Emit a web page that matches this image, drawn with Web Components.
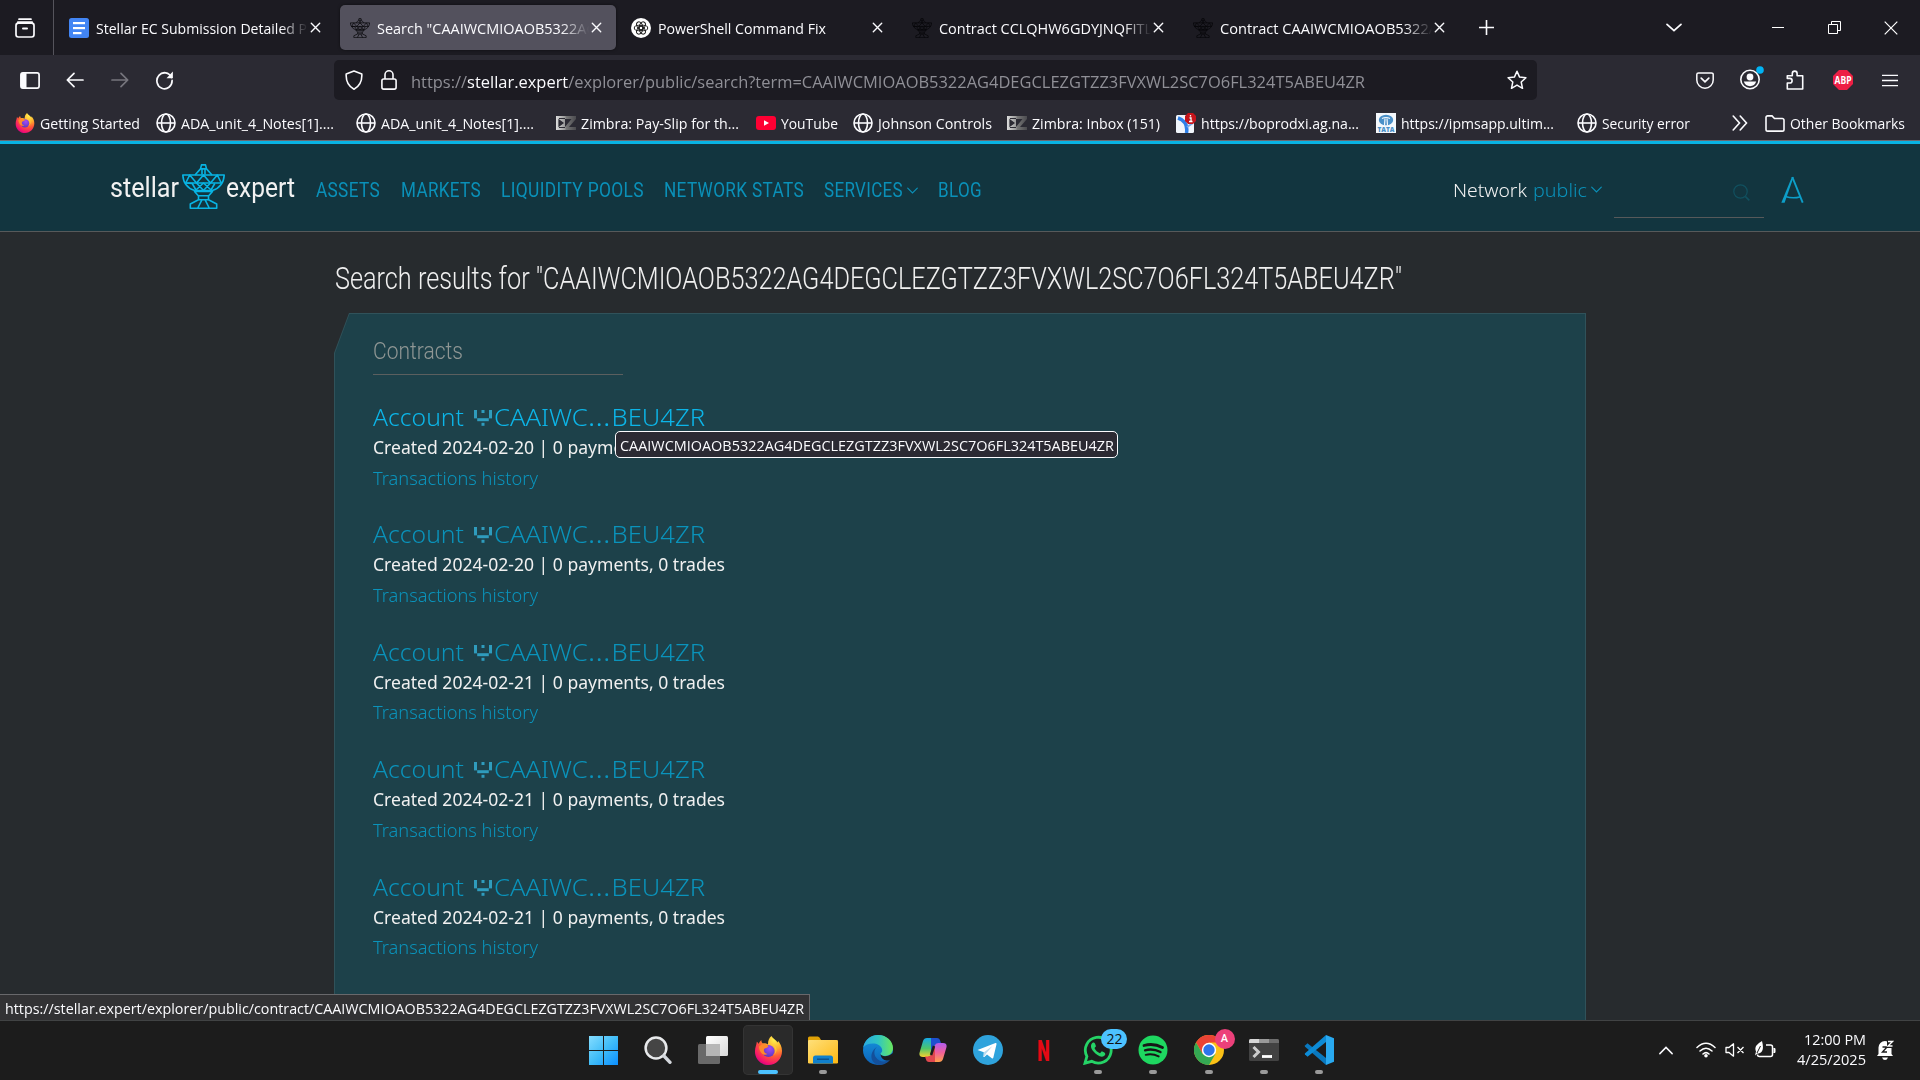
<!DOCTYPE html>
<html lang="en">
<head>
<meta charset="utf-8">
<title>Search - StellarExpert</title>
<style>
html,body{margin:0;height:100%;background:#272b2e;overflow:hidden}
body{font-family:"Open Sans","Noto Sans",sans-serif;color:#fbfbfe}
</style>
</head>
<body>
<desktop-screen></desktop-screen>
<script>
const ICONS = {
archive:['0 0 20 20','<g fill="none" stroke="#fbfbfe" stroke-width="1.7" stroke-linecap="round"><path d="M4 1.2h12M2.8 4.2h14.4"/><rect x="1" y="5.2" width="18" height="13.8" rx="2.4"/><path d="M8 10.4h4" stroke-width="2"/></g>'],
docs:['0 0 20 20','<rect width="20" height="20" rx="2.5" fill="#4285f4"/><g fill="#fff"><rect x="4" y="4" width="12" height="2.2"/><rect x="4" y="9" width="12" height="2.2"/><rect x="4" y="14" width="8.5" height="2.2"/></g>'],
x:['0 0 12 12','<path d="M1.4 1.4l9.2 9.2M10.6 1.4L1.4 10.6" stroke="#fbfbfe" stroke-width="1.5" stroke-linecap="round"/>'],
gpt:['0 0 20 20','<circle cx="10" cy="10" r="10" fill="#fff"/><g fill="none" stroke="#222" stroke-width="1"><ellipse cx="10" cy="7.6" rx="2.7" ry="4.3" transform="rotate(30 10 10)"/><ellipse cx="10" cy="7.6" rx="2.7" ry="4.3" transform="rotate(90 10 10)"/><ellipse cx="10" cy="7.6" rx="2.7" ry="4.3" transform="rotate(150 10 10)"/><ellipse cx="10" cy="7.6" rx="2.7" ry="4.3" transform="rotate(210 10 10)"/><ellipse cx="10" cy="7.6" rx="2.7" ry="4.3" transform="rotate(270 10 10)"/><ellipse cx="10" cy="7.6" rx="2.7" ry="4.3" transform="rotate(330 10 10)"/></g>'],
dish:['0 0 43 45','<g fill="none" stroke="currentColor" stroke-width="1.6" stroke-linejoin="round"><path d="M19.5.9h4l1 4h-6zM18.5 4.9L13 11M24.5 4.9L30 11M20 5.2v5.3M23 5.2v5.3"/><path d="M.8 11h41.4c-.4 8-5.2 13.5-12 15.5H12.800C6 24.500 1.200 19 .8 11zM3.600 19h35.800"/><path d="M3.700 19l4-8 6.800 8 7-8 7 8 6.800-8 4 8M3.700 19l6.500.5 3.800 6.500 7.500-7 7.500 7 3.800-6.500M14.500 19l7 7.500 7-7.500"/><path d="M12.500 27.500h18l-3.800 4.200H16.300zM16.500 31.700v4h10v-4M16.500 35.700L8.300 40v4.200h26.400V40l-8.200-4.300M20 35.700L15.800 44M23 35.700L27.200 44"/></g>'],
plus:['0 0 14 14','<path d="M7 0v14M0 7h14" stroke="#fbfbfe" stroke-width="1.5"/>'],
chev:['0 0 16 10','<path d="M1 1.500l7 7 7-7" fill="none" stroke="currentColor" stroke-width="1.700" stroke-linecap="round"/>'],
min:['0 0 12 12','<path d="M0 6.500h12" stroke="#fff" stroke-width="1"/>'],
restore:['0 0 13 13','<path d="M.5 3.500h9v9h-9zM3.500 3.500v-3h9v9h-3" fill="none" stroke="#fff"/>'],
wclose:['0 0 14 14','<path d="M.7.7l12.600 12.600M13.300.7L.7 13.300" stroke="#fff" stroke-width="1.200"/>'],
side:['0 0 20 16','<rect x=".9" y=".9" width="18.200" height="14.200" rx="2" fill="none" stroke="#fbfbfe" stroke-width="1.700"/><path d="M1 1h5.500v14H1z" fill="#fbfbfe"/>'],
back:['0 0 18 16','<path d="M17 8H1.500M8 1.300L1.300 8 8 14.700" fill="none" stroke="currentColor" stroke-width="1.700" stroke-linecap="round" stroke-linejoin="round"/>'],
reload:['0 0 20 20','<path d="M17.300 7.500A8 8 0 1 0 18 10.500" fill="none" stroke="#fbfbfe" stroke-width="1.800" stroke-linecap="round"/><path d="M18.800 1.500v6.700h-6.700z" fill="#fbfbfe"/>'],
shield:['0 0 18 20','<path d="M9 1l7.800 3c.4 6.500-1.800 12-7.800 15.200C3 16 .8 10.500 1.200 4z" fill="none" stroke="#fbfbfe" stroke-width="1.600" stroke-linejoin="round"/>'],
lock:['0 0 16 20','<rect x=".9" y="9" width="14.200" height="10.100" rx="1.800" fill="none" stroke="#fbfbfe" stroke-width="1.600"/><path d="M4 9V4.800a4 4 0 0 1 8 0V9" fill="none" stroke="#fbfbfe" stroke-width="1.600"/>'],
star:['0 0 20 20','<path d="M10 1.300l2.600 5.800 6.300.7-4.700 4.200 1.300 6.300-5.500-3.200-5.500 3.200 1.300-6.300L1.100 7.800l6.300-.7z" fill="none" stroke="#fbfbfe" stroke-width="1.500" stroke-linejoin="round"/>'],
pocket:['0 0 18 17','<path d="M2.500.9h13a1.700 1.700 0 0 1 1.700 1.700V8a8.200 8.200 0 0 1-16.400 0V2.600A1.700 1.700 0 0 1 2.500.9z" fill="none" stroke="#fbfbfe" stroke-width="1.500"/><path d="M5.200 6.200L9 9.800l3.800-3.600" fill="none" stroke="#fbfbfe" stroke-width="1.700" stroke-linecap="round"/>'],
account:['0 0 24 24','<circle cx="10" cy="13.500" r="9.200" fill="none" stroke="#fbfbfe" stroke-width="1.600"/><circle cx="10" cy="11" r="3.400" fill="#fbfbfe"/><path d="M3.800 15.600h12.400a6.500 6.500 0 0 1-12.400 0z" fill="#fbfbfe"/><circle cx="20" cy="4" r="3.800" fill="#00b3f4"/>'],
puzzle:['0 0 18 20','<path d="M1.300 19V13h2.500a2.300 2.300 0 0 0 0-4.600H1.300V5.800h5V3.500a2.400 2.400 0 0 1 4.800 0v2.300h5.600V19z" fill="none" stroke="#fbfbfe" stroke-width="1.600" stroke-linejoin="round"/>'],
abp:['0 0 20 20','<path d="M6 0h8l6 6v8l-6 6H6l-6-6V6z" fill="#ed1e45"/><text x="10" y="13.600" text-anchor="middle" font-family="Open Sans" font-weight="700" font-size="10" textLength="17" lengthAdjust="spacingAndGlyphs" fill="#fff">ABP</text>'],
menu:['0 0 16 14','<path d="M0 1.500h16M0 7h16M0 12.500h16" stroke="#fbfbfe" stroke-width="1.400"/>'],
globe:['0 0 20 20','<g fill="none" stroke="#fbfbfe" stroke-width="1.600"><circle cx="10" cy="10" r="9"/><ellipse cx="10" cy="10" rx="4.500" ry="9"/><path d="M1 10h18"/></g>'],
zimbra:['0 0 20 14','<defs><linearGradient id="z"><stop offset="0" stop-color="#ddd"/><stop offset=".45" stop-color="#999"/><stop offset=".5" stop-color="#777"/><stop offset="1" stop-color="#4b4b4f"/></linearGradient></defs><path d="M0 0h9v14H0zM9 0h11v3l-7 8h7v3H9v-3l6.500-8H9z" fill="url(#z)"/><path d="M3 2.500h6M3 11.500h6M3 4l4 3-4 3z" fill="#2b2a33" stroke="#2b2a33" stroke-width="1.200"/>'],
yt:['0 0 20 14','<rect width="20" height="14" rx="3" fill="#ff0033"/><path d="M8 4.200l5 2.800-5 2.800z" fill="#fff"/>'],
sicon:['0 0 20 20','<rect y="2" width="18" height="18" rx="1.500" fill="#f1f5fb"/><path d="M2 5c6 2 10 6 8.500 15" fill="none" stroke="#2f80e8" stroke-width="3.500"/><path d="M17 10l-6 4" stroke="#7aa9e8" stroke-width="2"/><path d="M12 0h5l3 3v5l-3 3h-5L9 8V3z" fill="#c5141b"/><path d="M14.500 2v1.500M13.500 5h1.500v3.500M13 8.500h3.500" stroke="#fff" stroke-width="1.300"/>'],
tata:['0 0 20 20','<rect width="20" height="20" fill="#f4f8fc"/><ellipse cx="10" cy="7" rx="7.200" ry="5.200" fill="#4a90c8"/><path d="M6 5.500q4-2 8 0M9 5.500l-.5 7M11 5.500l.5 7" stroke="#f4f8fc" stroke-width="1.200" fill="none"/><text x="10" y="18.800" text-anchor="middle" font-family="Open Sans" font-weight="800" font-size="6.200" textLength="17" lengthAdjust="spacingAndGlyphs" fill="#4a90c8">TATA</text>'],
more:['0 0 16 16','<path d="M1.200 1l6.300 7-6.300 7M8.200 1l6.300 7-6.300 7" fill="none" stroke="#fbfbfe" stroke-width="1.600" stroke-linecap="round"/>'],
folder:['0 0 20 17','<path d="M1 2.500A1.600 1.600 0 0 1 2.600.900h4.400l2.500 2.600h7.800A1.700 1.700 0 0 1 19 5.200v9.200a1.700 1.700 0 0 1-1.700 1.700H2.700A1.700 1.700 0 0 1 1 14.400z" fill="none" stroke="#fbfbfe" stroke-width="1.600"/>'],
search:['0 0 17 17','<circle cx="7.500" cy="7.500" r="6.700" fill="none" stroke="currentColor" stroke-width="1.200"/><path d="M12.300 12.300l4 4" stroke="currentColor" stroke-width="1.700"/>'],
alb:['0 0 23 27','<path d="M.3 26.700L10.900 1h1.700L3.600 26.700z" fill="#0d9fc9"/><path d="M11.300 1l10.400 25.700" stroke="#0d9fc9" stroke-width="1.900"/><path d="M4.500 20.500q7.500 2.600 15 .2" fill="none" stroke="#0d9fc9" stroke-width="1.500"/>'],
ident:['0 0 18 16','<g fill="currentColor"><rect x="0" y="0" width="3" height="8.400"/><rect x="15" y="0" width="3" height="8.400"/><rect x="3.200" y="8.200" width="11.600" height="3"/><rect x="7.500" y="0" width="3" height="3"/><rect x="7.500" y="12.800" width="3" height="3"/></g>'],
firefox:['0 0 30 30','<defs><radialGradient id="f" cx=".72" cy=".12" r="1"><stop offset="0" stop-color="#fff44f"/><stop offset=".32" stop-color="#ffb02e"/><stop offset=".58" stop-color="#ff5a35"/><stop offset=".85" stop-color="#f5126f"/><stop offset="1" stop-color="#c60084"/></radialGradient><radialGradient id="p" cx=".6" cy=".3" r=".8"><stop offset="0" stop-color="#a34cf5"/><stop offset="1" stop-color="#5036b8"/></radialGradient></defs><path d="M18 0c1.500 2.700 4.800 4.300 6.500 6.700.3-.5.300-1 .2-1.700 2.400 2.700 4.300 6.200 4.300 10.500C29 23.700 22.800 30 15 30S1 24 1 16c0-4 1.500-6.500 1.900-10 1 .500 1.500 1.300 1.800 2.200C5.500 6.500 6.500 5.200 7.700 4.500c0 1.300.3 2.200 1.100 3 2-.4 4.500.2 5.700 1.300C14.300 5.500 15.500 2 18 0z" fill="url(#f)"/><circle cx="15" cy="15.500" r="6.300" fill="url(#p)"/><path d="M5 11c2.500-2.500 7.500-3.500 10-.500-1 2-3.500 1.500-4.500 3-1 2 .5 5 3.500 5-4 2.500-8-1-9-7.500z" fill="#ff8a2a"/><path d="M19 9c4 3 4.500 8 1 11 3-2 6-8-1-11z" fill="#ffcf3a"/>'],
win:['0 0 29 29','<defs><linearGradient id="w" x1="0" y1="0" x2="29" y2="29" gradientUnits="userSpaceOnUse"><stop offset="0" stop-color="#85ddff"/><stop offset=".5" stop-color="#41bdf8"/><stop offset="1" stop-color="#0b8fff"/></linearGradient></defs><path d="M0 0h14v14H0zM15 0h14v14H15zM0 15h14v14H0zM15 15h14v14H15z" fill="url(#w)"/>'],
tsearch:['0 0 28 28','<circle cx="12" cy="12" r="10.400" fill="#454545" stroke="#e8eaec" stroke-width="2.500"/><path d="M20 20l6 6.300" stroke="#d3d7dc" stroke-width="3.400" stroke-linecap="round"/>'],
task:['0 0 30 28','<defs><linearGradient id="t" x1="0" y1="0" x2="1" y2="1"><stop offset="0" stop-color="#fff"/><stop offset="1" stop-color="#d9d9d9"/></linearGradient></defs><rect x="8" width="22" height="20" rx="1.500" fill="url(#t)"/><rect y="8" width="22" height="20" rx="1.500" fill="#777" opacity=".85"/><path d="M8 8h14v12H8z" fill="#b6b6b6"/>'],
files:['0 0 30 28','<defs><linearGradient id="g" x1="0" y1="0" x2="1" y2="1"><stop offset="0" stop-color="#ffe07a"/><stop offset="1" stop-color="#fdb813"/></linearGradient></defs><path d="M0 2Q0 .5 1.500.5h8.500q1.500 0 3 3.500v5H0z" fill="#e0a106"/><rect y="4" width="30" height="23.500" rx="1.300" fill="url(#g)"/><path d="M5 27.500V22q0-2.500 2.500-2.500h15Q25 19.500 25 22v5.500z" fill="#1080cc"/><path d="M9 23.200h12" stroke="#0a4a85" stroke-width="1.300"/>'],
edge:['0 0 30 30','<defs><linearGradient id="a"><stop offset="0" stop-color="#2aa9e0"/><stop offset=".5" stop-color="#30c6c2"/><stop offset="1" stop-color="#6be85c"/></linearGradient><linearGradient id="b" x1="0" y1="0" x2="0" y2="1"><stop offset="0" stop-color="#1597e0"/><stop offset="1" stop-color="#0d62b8"/></linearGradient></defs><circle cx="15" cy="15" r="15" fill="url(#b)"/><path d="M.3 12.500C1.500 5 7.500 0 15 0c9 0 15 6.500 15 13 0 5-3.700 8-8 8-3 0-5-1-4.500-2.500 1.500-1.200 2-2.500 1.500-4.500C18 10.500 14 8.500 10 8.500c-4.500 0-8 1.500-9.700 4z" fill="url(#a)"/><path d="M14 12c-3 2-3.500 7-1 10.500 3.500 5 10 5 14.500 1.500C25 28 20.500 30 16 30 10 29 7 23.500 9 18c1-3 3-5 5-6z" fill="#14509a"/><path d="M17.500 18.500c.5 3 6 4 11 .5l1.500-1v3l-2.500 3.500c-5 2.500-10-.500-10-6z" fill="#1c1c1c"/>'],
copilot:['0 0 28 26','<defs><linearGradient id="c" x1="0" y1="0" x2="0" y2="1"><stop offset="0" stop-color="#15a9e8"/><stop offset=".55" stop-color="#4dc66a"/><stop offset="1" stop-color="#f5d130"/></linearGradient><linearGradient id="d" x1="0" y1="0" x2="0" y2="1"><stop offset="0" stop-color="#b05cf0"/><stop offset=".5" stop-color="#f0609a"/><stop offset="1" stop-color="#ffa04a"/></linearGradient></defs><path d="M8 1h10l-5.500 16Q11.500 20 8.500 20H4Q-.5 20 .6 15.500L4 4Q5 1 8 1z" fill="url(#c)"/><path d="M12 1h6q2.500 0 3.300 3l.9 2.800h-3.500q-2.500 0-3.500 3L12 17z" fill="#1d50cf"/><path d="M20 25H10l5.500-16q1-3 4-3H24q4.500 0 3.400 4.500L24 22q-1 3-4 3z" fill="url(#d)"/><path d="M16 25h-6q-2.500 0-3.200-3L6 19.500h3q2.500 0 3.500-3L16 9z" fill="#e0484e"/><path d="M15 9l-3 9" stroke="#1c1c1c" stroke-width="2.500"/>'],
tele:['0 0 30 30','<circle cx="15" cy="15" r="15" fill="#2fa3dc"/><path d="M4.500 15L22.500 8q1.200-.3 1 1.200l-3.200 13.600q-.4 1-1.500.4l-4.800-3.600-2.600 2.500-1-.2.400-4.600z" fill="#fff"/><path d="M11 17.200l8.500-6.200-6.500 7.500-1.700 3.300z" fill="#b9daee"/>'],
netflix:['0 0 14 24','<text x="7" y="23" text-anchor="middle" font-family="Roboto" font-weight="900" font-size="31" textLength="13.500" lengthAdjust="spacingAndGlyphs" fill="#e50914">N</text>'],
whats:['0 0 30 30','<path d="M2 28.200l1.900-6.900A12.900 12.900 0 1 1 8.700 26.300z" fill="none" stroke="#25d366" stroke-width="2.800"/><path d="M10 7.500c-3 2-2.500 5.500.5 9s7.500 6.500 10.500 4.500c2-1.500 1.500-3 0-3.800l-2.200-1-1.800 2c-2.500-1-4.500-3-5.500-5.300l1.500-1.600-1-2.800q-.7-1.300-2-1z" fill="#25d366"/>'],
spot:['0 0 30 30','<circle cx="15" cy="15" r="14.500" fill="#1ed760"/><g fill="none" stroke="#161616" stroke-linecap="round"><path d="M6 10.500q9.500-2.700 18.500 2" stroke-width="2.800"/><path d="M7 15.300q8-2.200 15.500 1.800" stroke-width="2.300"/><path d="M7.700 19.800q6.500-1.800 13 1.600" stroke-width="1.900"/></g>'],
chrome:['0 0 30 30','<circle cx="15" cy="15" r="15" fill="#fbc116"/><path d="M2 7.500A15 15 0 0 1 28 7.500H15L8.500 18.700z" fill="#ea4335"/><path d="M2 7.500A15 15 0 0 0 15 30l6.500-11.300H8.500z" fill="#34a853"/><circle cx="15" cy="15" r="7.200" fill="#fff"/><circle cx="15" cy="15" r="5.700" fill="#2d74ea"/>'],
term:['0 0 30 22','<rect width="30" height="22" rx="1.500" fill="#424242"/><path d="M0 4V1.500Q0 0 1.500 0H10v4z" fill="#d6d6d6"/><path d="M10 0h10v4H10z" fill="#9a9a9a"/><path d="M20 0h8.500Q30 0 30 1.500V4H20z" fill="#6d6d6d"/><path d="M4.500 8l5 5-5 5" fill="none" stroke="#ccc" stroke-width="3"/><path d="M13 17.500h10" stroke="#fff" stroke-width="2.800"/>'],
code:['0 0 30 30','<path d="M1 10.500l2.500-2.200L22 23v7L.8 11.500z" fill="#0a78be"/><path d="M1 19.500l2.500 2.200L22 7V0L.8 18.500z" fill="#0d8bd6"/><path d="M22 0l8 3.300v23.400L22 30z" fill="#29a9f0"/>'],
wifi:['0 0 20 16','<g fill="none" stroke="#fff" stroke-width="1.500" stroke-linecap="round"><path d="M1 5.500q9-8.500 18 0M4 9q6-5.500 12 0M7 12q3-2.800 6 0"/></g><circle cx="10" cy="13.700" r="1.800" fill="#fff"/>'],
mute:['0 0 20 14','<path d="M1 4.500h3L8.500.8v12.400L4 9.500H1zM12.500 4l6 6M18.500 4l-6 6" fill="none" stroke="#fff" stroke-width="1.300" stroke-linejoin="round"/>'],
batt:['0 0 21 17','<path d="M11 4h4.500q2 0 2 2v7.500q0 2-2 2H4.500q-2 0-2-2" fill="none" stroke="#fff" stroke-width="1.500"/><path d="M18.500 7.500h1.500v4h-1.500" stroke="#fff" fill="#fff"/><path d="M7 0c-5 3-8 6-6 10.500l-1 4 2.500-2C8 12.500 9 7 7 0z" fill="#fff"/><path d="M2 12L5.500 5" stroke="#1c1c1c"/>'],
bell:['0 0 18 20','<path d="M2.500 14V7.500a6.500 6.500 0 0 1 13 0V14l1.500 2H1zM6 17.500h6q-1 2.500-3 2.500t-3-2.500z" fill="#fff"/><path d="M11 0h7v8h-7z" fill="#1c1c1c"/><path d="M6.500 7h4.500L6.500 12H11" fill="none" stroke="#1c1c1c" stroke-width="1.400"/><path d="M12 1.500h4.500L12 6h4.500" fill="none" stroke="#fff" stroke-width="1.300"/>']
};
class UiIcon extends HTMLElement{
  connectedCallback(){
    const [vb,body]=ICONS[this.getAttribute('name')], w=this.getAttribute('w'), h=this.getAttribute('h')||w;
    this.attachShadow({mode:'open'}).innerHTML=`<style>:host{display:block;flex:none;width:${w}px;height:${h}px}svg{display:block}</style><svg width="${w}" height="${h}" viewBox="${vb}" preserveAspectRatio="none">${body}</svg>`;
  }
}
customElements.define('ui-icon',UiIcon);

/* A single line of text condensed or widened to the width its layout reserves. */
class FitText extends HTMLElement{
  connectedCallback(){
    const w=+this.getAttribute('w');
    this.attachShadow({mode:'open'}).innerHTML=`<style>:host{display:block;flex:none;width:${w}px;white-space:pre}span{display:inline-block;transform-origin:0 50%}</style><span><slot></slot></span>`;
    const s=this.shadowRoot.querySelector('span');
    s.style.transform=`scaleX(${w/s.getBoundingClientRect().width})`;
  }
}
customElements.define('fit-text',FitText);

const define=(name,css,html)=>{
  const t=document.createElement('template');
  t.innerHTML=`<style>${css}</style>${html}`;
  customElements.define(name,class extends HTMLElement{
    connectedCallback(){
      if(this.shadowRoot)return;
      this.attachShadow({mode:'open'}).append(document.importNode(t.content,true));
    }
  });
};

class BrowserTab extends HTMLElement{
  connectedCallback(){
    const g=n=>this.getAttribute(n);
    this.attachShadow({mode:'open'}).innerHTML=`<style>
    :host{display:flex;flex:none;align-items:center;width:276px;height:45px;border-radius:5px;box-sizing:border-box;padding-left:10px;font-size:15px;line-height:22px}
    :host([active]){background:#53515d;box-shadow:0 0 3px #0008}
    ui-icon{color:#060608}
    .t{width:212px;overflow:hidden;margin:1px 2px 0 7px;-webkit-mask:linear-gradient(90deg,#000 87%,transparent)}
    :host([short]) .t{-webkit-mask:none}
    </style><ui-icon name="${g('icon')}" w="20"></ui-icon><div class="t"><fit-text w="${g('w')}">${g('label')}</fit-text></div><ui-icon name="x" w="11"></ui-icon>`;
  }
}
customElements.define('browser-tab',BrowserTab);

define('tab-strip',`
:host{display:flex;align-items:center;height:55px;background:#1c1b22}
.a{width:54px;height:55px;border-right:1px solid #55545c;display:flex;align-items:center;justify-content:center;box-sizing:border-box;padding-right:3px}
.tabs{display:flex;gap:5.100px;padding-left:5px}
.end{display:flex;align-items:center}
`,`<div class="a"><ui-icon name="archive" w="20"></ui-icon></div>
<div class="tabs">
<browser-tab icon="docs" label="Stellar EC Submission Detailed P" w="211"></browser-tab>
<browser-tab active icon="dish" label='Search "CAAIWCMIOAOB5322AG' w="220"></browser-tab>
<browser-tab short icon="gpt" label="PowerShell Command Fix" w="168"></browser-tab>
<browser-tab icon="dish" label="Contract CCLQHW6GDYJNQFITL" w="213"></browser-tab>
<browser-tab icon="dish" label="Contract CAAIWCMIOAOB5322A" w="218"></browser-tab>
</div><div class="end">
<ui-icon name="plus" w="15" style="margin-left:20px"></ui-icon>
<ui-icon name="chev" w="16" h="9" style="margin-left:172px"></ui-icon>
<ui-icon name="min" w="12" style="margin:-2px 0 0 90px"></ui-icon>
<ui-icon name="restore" w="13" style="margin-left:44px"></ui-icon>
<ui-icon name="wclose" w="14" style="margin-left:43px"></ui-icon></div>`);

define('nav-bar',`
:host{display:flex;align-items:center;height:50px;background:#2b2a33;padding-left:20px;box-sizing:border-box}
.url{display:flex;align-items:center;width:1203px;height:40px;margin-left:160px;border-radius:5px;background:#1c1b22;box-sizing:border-box;padding-left:11px;font-size:16.500px;line-height:24px;color:#8f8f96}
b{font-weight:400;color:#fbfbfe}
`,`<ui-icon name="side" w="20" h="17"></ui-icon>
<ui-icon name="back" w="18" h="16" style="margin-left:26px"></ui-icon>
<ui-icon name="back" w="18" h="16" style="margin-left:27px;transform:scaleX(-1);color:#77767e"></ui-icon>
<ui-icon name="reload" w="19" h="20" style="margin-left:26px"></ui-icon>
<div class="url"><ui-icon name="shield" w="18" h="20"></ui-icon><ui-icon name="lock" w="16" h="20" style="margin-left:18px"></ui-icon>
<fit-text w="954" style="margin:4px 0 0 14px">https://<b>stellar.expert</b>/explorer/public/search?term=CAAIWCMIOAOB5322AG4DEGCLEZGTZZ3FVXWL2SC7O6FL324T5ABEU4ZR</fit-text>
<ui-icon name="star" w="20" style="margin-left:142px"></ui-icon></div>
<ui-icon name="pocket" w="18" h="17" style="margin-left:159px"></ui-icon>
<ui-icon name="account" w="24" style="margin:-4px 0 0 26px"></ui-icon>
<ui-icon name="puzzle" w="18" h="20" style="margin-left:22px"></ui-icon>
<ui-icon name="abp" w="20" style="margin-left:29px"></ui-icon>
<ui-icon name="menu" w="16" h="13" style="margin-left:29px"></ui-icon>`);

class BookMark extends HTMLElement{
  connectedCallback(){
    const g=n=>this.getAttribute(n);
    this.attachShadow({mode:'open'}).innerHTML=`<style>:host{display:flex;align-items:center;flex:none;gap:5px;margin-left:${g('gap')}px}</style><ui-icon name="${g('icon')}" w="20" h="${g('h')||20}"></ui-icon><fit-text w="${g('w')}">${this.textContent}</fit-text>`;
  }
}
customElements.define('book-mark',BookMark);
define('bookmarks-bar',`
:host{display:flex;align-items:center;height:36px;box-sizing:border-box;padding-top:1px;background:#2b2a33;border-bottom:1px solid #6b6a72;font-size:15px;line-height:24px}
`,`<book-mark gap="15" icon="firefox" w="100">Getting Started</book-mark>
<book-mark gap="16" icon="globe" w="153">ADA_unit_4_Notes[1]....</book-mark>
<book-mark gap="22" icon="globe" w="153">ADA_unit_4_Notes[1]....</book-mark>
<book-mark gap="22" icon="zimbra" h="14" w="158">Zimbra: Pay-Slip for th...</book-mark>
<book-mark gap="17" icon="yt" h="14" w="57">YouTube</book-mark>
<book-mark gap="15" icon="globe" w="114">Johnson Controls</book-mark>
<book-mark gap="15" icon="zimbra" h="14" w="128">Zimbra: Inbox (151)</book-mark>
<book-mark gap="16" icon="sicon" w="158">https://boprodxi.ag.na...</book-mark>
<book-mark gap="17" icon="tata" w="153">https://ipmsapp.ultim...</book-mark>
<book-mark gap="23" icon="globe" w="88">Security error</book-mark>
<ui-icon name="more" w="16" style="margin-left:42px"></ui-icon>
<book-mark gap="17" icon="folder" h="17" w="115">Other Bookmarks</book-mark>`);

define('site-header',`
:host{display:flex;align-items:center;box-sizing:border-box;height:91px;border-top:3px solid #08b4e4;border-bottom:1px solid #56595a;background:#12353f;padding-left:110px;font:400 20px/30px Roboto,sans-serif;color:#0a90b8}
.logo{display:flex;align-items:center;font-size:28px;color:#f2f2f2;margin-right:21px}
.logo fit-text{padding-top:1px}
.logo ui-icon{color:#08b4e4;margin:-2px 1px 0 3px}
nav{display:flex;gap:21px;padding-top:5px;letter-spacing:.4px}
.s{display:flex;align-items:center;gap:4px;margin-right:-1px}
.net{display:flex;align-items:center;gap:4px;padding-top:4px;margin-left:471px;font:300 19px/30px "Noto Sans",sans-serif}
.field{width:150px;height:52px;border-bottom:1px solid #56595a;margin:8px 0 0 12px;box-sizing:border-box;display:flex;align-items:center;justify-content:flex-end;padding:2px 14px 0 0;color:#11505f}
`,`<div class="logo"><fit-text w="69">stellar</fit-text><ui-icon name="dish" w="43" h="45"></ui-icon><fit-text w="69">expert</fit-text></div>
<nav><fit-text w="64">ASSETS</fit-text><fit-text w="80" style="margin-right:-1px">MARKETS</fit-text><fit-text w="143" style="margin-right:-1px">LIQUIDITY POOLS</fit-text><fit-text w="140" style="margin-right:-1px">NETWORK STATS</fit-text><div class="s"><fit-text w="79">SERVICES</fit-text><ui-icon name="chev" w="11" h="7"></ui-icon></div><fit-text w="44">BLOG</fit-text></nav>
<div class="net"><fit-text w="74" style="color:#f2f2f2">Network</fit-text><fit-text w="54" style="margin-left:2px">public</fit-text><ui-icon name="chev" w="11" h="7"></ui-icon></div>
<div class="field"><ui-icon name="search" w="17"></ui-icon></div>
<ui-icon name="alb" w="23" h="27" style="margin:4px 0 0 17px"></ui-icon>`);

class SearchResult extends HTMLElement{
  connectedCallback(){
    this.attachShadow({mode:'open'}).innerHTML=`<style>
    :host{display:block;position:relative;height:117.400px;font:300 18px/31px "Noto Sans",sans-serif;color:#0a93bb}
    .t{display:flex;align-items:center;font-size:23px;line-height:33px;height:33px;margin-bottom:-2px}
    .t ui-icon{color:#2f9cbd;margin:1px 2px 0 10px}
    .t i{font-style:normal;font-size:28px;line-height:0;letter-spacing:1px}
    :host([hover]) .t{color:#0cb5e8}
    .m{color:#f0f0f0;font-weight:400}
    .m,.h{height:30.700px}
    </style><div class="t"><fit-text w="91">Account</fit-text><ui-icon name="ident" w="18" h="16"></ui-icon><fit-text w="211">CAAIWC<i>…</i>BEU4ZR</fit-text></div>
    <fit-text class="m" w="352">Created ${this.getAttribute('date')} | 0 payments, 0 trades</fit-text>
    <fit-text class="h" w="165">Transactions history</fit-text><slot></slot>`;
  }
}
customElements.define('search-result',SearchResult);

define('tool-tip',`
:host{position:absolute;left:242px;top:30px;display:block;box-sizing:border-box;width:503px;height:27px;border:1px solid #fbfbfe;border-radius:5px;background:#2b2a33;color:#fbfbfe;padding:2px 0 0 4px;font:400 15px/22px "Open Sans",sans-serif}
`,`<fit-text w="494"><slot></slot></fit-text>`);

define('results-panel',`
:host{display:block;position:relative;width:1252px;height:707px;margin-left:334px;box-sizing:border-box;padding:18px 39px 0;background:#30525a;clip-path:polygon(15px 0,100% 0,100% 100%,0 100%,0 40px)}
:host::before{content:"";position:absolute;inset:1px 1px 0 1px;background:#1d414a;clip-path:polygon(14.500px 0,100% 0,100% 100%,0 100%,0 39px)}
.in{position:relative}
.c{width:250px;height:43px;border-bottom:1px solid #5b5f5f;font:300 24px/40px Roboto,sans-serif;color:#8f9694;margin-bottom:26px}
`,`<div class="in"><div class="c"><fit-text w="90">Contracts</fit-text></div><slot></slot></div>`);

define('page-content',`
:host{display:block;background:#272b2e;overflow:hidden}
.h{margin:27px 0 14px 335px;height:40px;font:300 31px/40px Roboto,sans-serif;color:#f0f0f0}
`,`<fit-text class="h" w="1067">Search results for "CAAIWCMIOAOB5322AG4DEGCLEZGTZZ3FVXWL2SC7O6FL324T5ABEU4ZR"</fit-text>
<results-panel>
<search-result hover date="2024-02-20"><tool-tip>CAAIWCMIOAOB5322AG4DEGCLEZGTZZ3FVXWL2SC7O6FL324T5ABEU4ZR</tool-tip></search-result>
<search-result date="2024-02-20"></search-result>
<search-result date="2024-02-21"></search-result>
<search-result date="2024-02-21"></search-result>
<search-result date="2024-02-21"></search-result>
</results-panel>`);

define('status-link',`
:host{position:absolute;left:0;top:994px;display:block;box-sizing:border-box;width:810px;height:26px;background:#323234;border:solid #68686b;border-width:1px 1px 0 0;padding:1px 0 0 5px;font-size:15px;line-height:24px;color:#fbfbfe}
`,`<fit-text w="799">https://stellar.expert/explorer/public/contract/CAAIWCMIOAOB5322AG4DEGCLEZGTZZ3FVXWL2SC7O6FL324T5ABEU4ZR</fit-text>`);

class TaskApp extends HTMLElement{
  connectedCallback(){
    const g=n=>this.getAttribute(n);
    this.attachShadow({mode:'open'}).innerHTML=`<style>
    :host{display:flex;flex:none;position:relative;width:50px;height:50px;align-items:center;justify-content:center;border-radius:5px;box-sizing:border-box}
    :host([active]){background:#2a2a2a;box-shadow:inset 0 0 0 1px #343434}
    :host([open])::after,:host([active])::after{content:"";position:absolute;left:21px;bottom:1px;width:8px;height:4px;border-radius:2px;background:#9a9a9a}
    :host([active])::after{left:15px;width:20px;background:#4cc2ff}
    </style><ui-icon name="${g('icon')}" w="${g('w')||30}" h="${g('h')||g('w')||30}"></ui-icon><slot></slot>`;
  }
}
customElements.define('task-app',TaskApp);
define('app-badge',`
:host{position:absolute;left:28px;top:4px;width:26px;height:20px;border-radius:10px;background:#4cc2ff;color:#111;font-size:14px;line-height:20px;text-align:center}
:host([pink]){left:31px;width:20px;background:#ec407a;color:#fff;font:500 11px/20px Roboto,sans-serif}
`,`<slot></slot>`);
define('task-bar',`
:host{display:flex;box-sizing:border-box;height:60px;border-top:1px solid #414344;background:#1c1c1c;padding-left:578px;align-items:center}
.apps{display:flex;gap:5.050px;margin-top:-1px}
.tray{display:flex;align-items:center;margin:-1px 0 0 315px}
.clock{display:flex;flex-direction:column;align-items:flex-end;font-size:14.500px;line-height:20px;margin:-1px 0 0 20px;width:70px}
`,`<div class="apps">
<task-app icon="win" w="29"></task-app><task-app icon="tsearch" w="28"></task-app><task-app icon="task" h="28"></task-app>
<task-app active icon="firefox" w="29"></task-app><task-app open icon="files" h="28"></task-app><task-app icon="edge"></task-app>
<task-app icon="copilot" w="28" h="26"></task-app><task-app icon="tele"></task-app><task-app icon="netflix" w="13" h="23"></task-app>
<task-app open icon="whats"><app-badge>22</app-badge></task-app><task-app open icon="spot"></task-app>
<task-app open icon="chrome"><app-badge pink>A</app-badge></task-app><task-app open icon="term" h="22"></task-app><task-app open icon="code"></task-app></div>
<div class="tray"><ui-icon name="chev" w="14" h="9" style="transform:scaleY(-1)"></ui-icon>
<ui-icon name="wifi" w="20" h="16" style="margin-left:23px"></ui-icon>
<ui-icon name="mute" w="20" h="14" style="margin-left:9px"></ui-icon>
<ui-icon name="batt" w="21" h="17" style="margin:-2px 0 0 10px"></ui-icon>
<div class="clock"><fit-text w="62">12:00 PM</fit-text><fit-text w="69">4/25/2025</fit-text></div>
<ui-icon name="bell" w="18" h="20" style="margin-left:10px"></ui-icon></div>`);

define('desktop-screen',`
:host{display:flex;flex-direction:column;position:relative;width:1920px;height:1080px;overflow:hidden}
site-header,task-bar,tab-strip,nav-bar,bookmarks-bar{flex-shrink:0}
page-content{flex:1;height:0}
`,`<tab-strip></tab-strip><nav-bar></nav-bar><bookmarks-bar></bookmarks-bar><site-header></site-header><page-content></page-content><task-bar></task-bar><status-link></status-link>`);
</script>
</body>
</html>
